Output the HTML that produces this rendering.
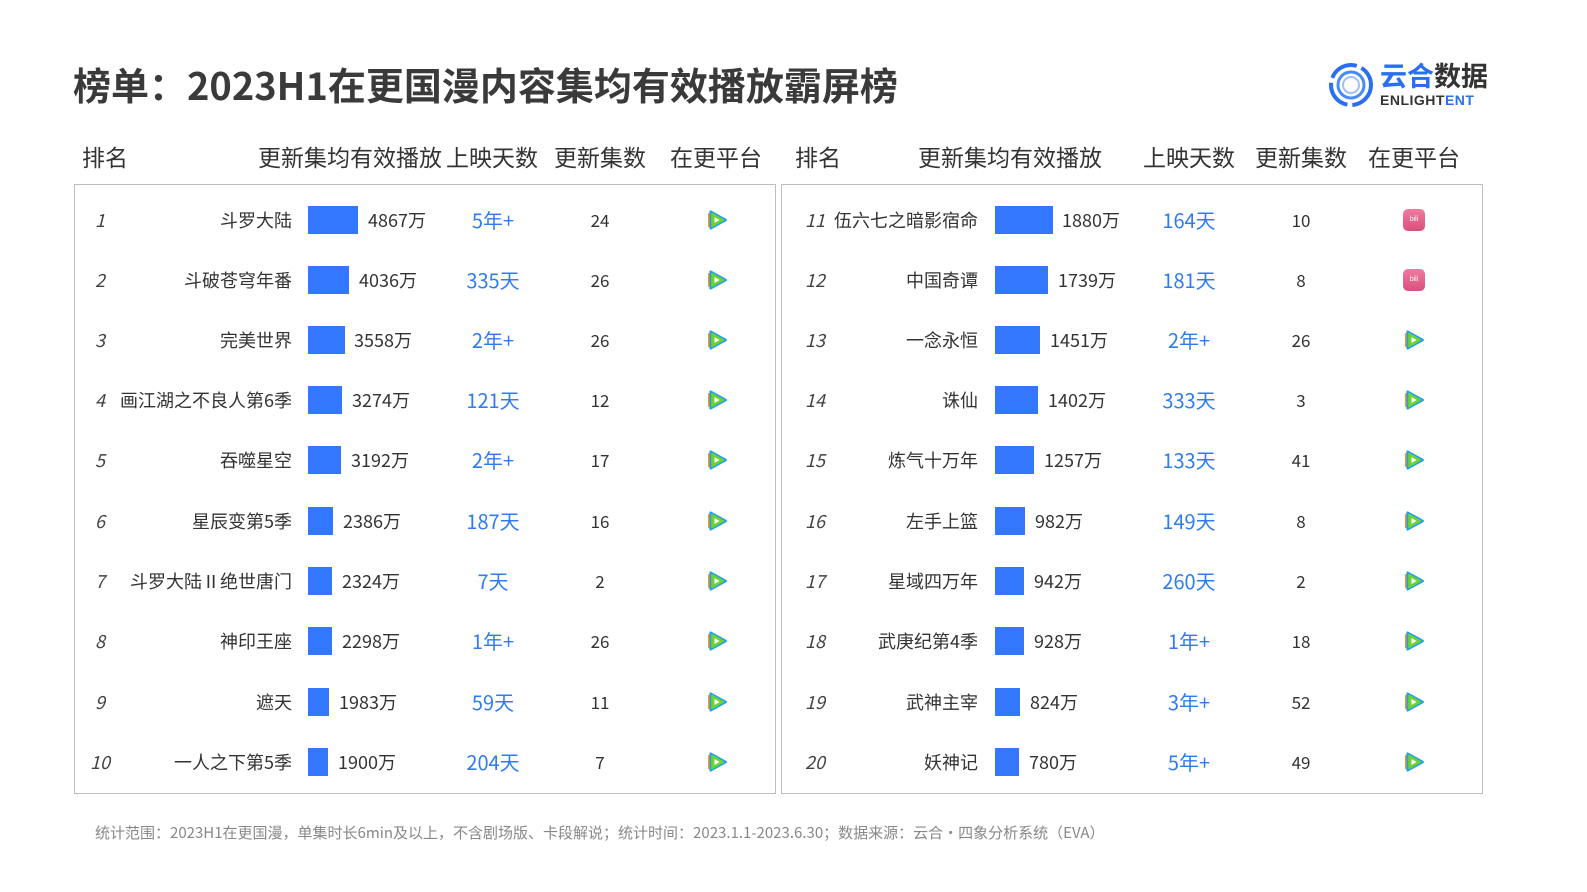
<!DOCTYPE html>
<html><head><meta charset="utf-8"><style>
body{margin:0;width:1587px;height:892px;background:#fff;position:relative;overflow:hidden;font-family:"Liberation Sans","Noto Sans CJK SC",sans-serif;color:#333}
.a{position:absolute;white-space:nowrap}
.t{left:73px;top:58px;font-size:38px;font-weight:bold;color:#3a3a3a;font-family:"Noto Sans CJK SC",sans-serif;line-height:52px}
.h{top:140px;font-size:23px;color:#333;line-height:32px;font-family:"Noto Sans CJK SC",sans-serif}
.box{position:absolute;border:1.5px solid #bdbdbd;top:184px;height:608px}
.r{position:absolute;height:30px;line-height:30px;font-size:18px;left:0;width:1587px;font-family:"Noto Sans CJK SC",sans-serif}
.r span{position:absolute;white-space:nowrap}
.rk{font-style:italic;color:#444}
.nm{text-align:right;color:#333}
.bar{background:#3377ff;height:28px;top:1px}
.d{color:#2f7cf0;font-size:20px;text-align:center;width:100px}
.e{text-align:center;width:60px;font-size:17px}
.ic{width:24px;height:24px;top:3px}
.bl{background:linear-gradient(#f07aa0,#d9517e);border-radius:5px;width:22px;height:22px;top:4px;color:#fff;font-size:7px;line-height:22px;text-align:center;font-family:"Liberation Sans",sans-serif!important}
.ft{left:95px;top:822px;font-size:15px;color:#888;font-family:"Noto Sans CJK SC",sans-serif}
</style></head><body>
<div class="a t">榜单：2023H1在更国漫内容集均有效播放霸屏榜</div>
<div class="a" style="left:1328px;top:62px;width:46px;height:46px">
<svg width="46" height="46" viewBox="0 0 46 46"><circle cx="23" cy="23" r="20" fill="none" stroke="#2a6ff0" stroke-width="4" stroke-dasharray="30 5"/><circle cx="23" cy="23" r="13" fill="none" stroke="#4a8af8" stroke-width="3"/><circle cx="23" cy="23" r="8" fill="none" stroke="#9dc0ff" stroke-width="2"/></svg></div>
<div class="a" style="left:1380px;top:62px;font-size:27px;font-weight:bold;color:#2a6ff0;line-height:30px">云合<span style="color:#333">数据</span></div>
<div class="a" style="left:1380px;top:92px;font-size:14px;font-weight:bold;color:#333;letter-spacing:0.5px">ENLIGHT<span style="color:#2a6ff0">ENT</span></div>

<div class="a h" style="left:82px">排名</div>
<div class="a h" style="left:258px">更新集均有效播放</div>
<div class="a h" style="left:446px">上映天数</div>
<div class="a h" style="left:554px">更新集数</div>
<div class="a h" style="left:670px">在更平台</div>
<div class="a h" style="left:795px">排名</div>
<div class="a h" style="left:918px">更新集均有效播放</div>
<div class="a h" style="left:1143px">上映天数</div>
<div class="a h" style="left:1255px">更新集数</div>
<div class="a h" style="left:1368px">在更平台</div>

<div class="box" style="left:74px;width:700px"></div>
<div class="box" style="left:781px;width:700px"></div>

<svg width="0" height="0" style="position:absolute"><defs><symbol id="tx" viewBox="0 0 24 24"><path d="M6 2.5 Q4 2 4.5 5 L4.5 19 Q4 22 6 21.5 L21 13.3 Q23 12 21 10.7 Z" fill="#1ea0f0"/><path d="M7 5.5 L7 18.5 L18.5 12 Z" fill="#6fd230" stroke="#6fd230" stroke-width="1.5" stroke-linejoin="round"/><path d="M4.5 5 Q3 4 3 7 L3 17 Q3 20 4.5 19 Z" fill="#f7931e"/><path d="M9.5 9 L9.5 15 L14.5 12 Z" fill="#fff"/></symbol></defs></svg>

<div class="r" style="top:205px"><span class="rk" style="left:95px">1</span><span class="nm" style="right:1295px">斗罗大陆</span><span class="bar" style="left:308px;width:50px"></span><span style="left:368px">4867万</span><span class="d" style="left:443px">5年+</span><span class="e" style="left:570px">24</span><svg class="a ic" style="left:705px"><use href="#tx"/></svg>
<span class="rk" style="left:805px">11</span><span class="nm" style="right:609px">伍六七之暗影宿命</span><span class="bar" style="left:995px;width:58px"></span><span style="left:1062px">1880万</span><span class="d" style="left:1139px">164天</span><span class="e" style="left:1271px">10</span><span class="bl" style="left:1403px">bili</span></div>

<div class="r" style="top:265px"><span class="rk" style="left:95px">2</span><span class="nm" style="right:1295px">斗破苍穹年番</span><span class="bar" style="left:308px;width:41px"></span><span style="left:359px">4036万</span><span class="d" style="left:443px">335天</span><span class="e" style="left:570px">26</span><svg class="a ic" style="left:705px"><use href="#tx"/></svg>
<span class="rk" style="left:805px">12</span><span class="nm" style="right:609px">中国奇谭</span><span class="bar" style="left:995px;width:53px"></span><span style="left:1058px">1739万</span><span class="d" style="left:1139px">181天</span><span class="e" style="left:1271px">8</span><span class="bl" style="left:1403px">bili</span></div>

<div class="r" style="top:325px"><span class="rk" style="left:95px">3</span><span class="nm" style="right:1295px">完美世界</span><span class="bar" style="left:308px;width:37px"></span><span style="left:354px">3558万</span><span class="d" style="left:443px">2年+</span><span class="e" style="left:570px">26</span><svg class="a ic" style="left:705px"><use href="#tx"/></svg>
<span class="rk" style="left:805px">13</span><span class="nm" style="right:609px">一念永恒</span><span class="bar" style="left:995px;width:45px"></span><span style="left:1050px">1451万</span><span class="d" style="left:1139px">2年+</span><span class="e" style="left:1271px">26</span><svg class="a ic" style="left:1402px"><use href="#tx"/></svg></div>

<div class="r" style="top:385px"><span class="rk" style="left:95px">4</span><span class="nm" style="right:1295px">画江湖之不良人第6季</span><span class="bar" style="left:308px;width:34px"></span><span style="left:352px">3274万</span><span class="d" style="left:443px">121天</span><span class="e" style="left:570px">12</span><svg class="a ic" style="left:705px"><use href="#tx"/></svg>
<span class="rk" style="left:805px">14</span><span class="nm" style="right:609px">诛仙</span><span class="bar" style="left:995px;width:43px"></span><span style="left:1048px">1402万</span><span class="d" style="left:1139px">333天</span><span class="e" style="left:1271px">3</span><svg class="a ic" style="left:1402px"><use href="#tx"/></svg></div>

<div class="r" style="top:445px"><span class="rk" style="left:95px">5</span><span class="nm" style="right:1295px">吞噬星空</span><span class="bar" style="left:308px;width:33px"></span><span style="left:351px">3192万</span><span class="d" style="left:443px">2年+</span><span class="e" style="left:570px">17</span><svg class="a ic" style="left:705px"><use href="#tx"/></svg>
<span class="rk" style="left:805px">15</span><span class="nm" style="right:609px">炼气十万年</span><span class="bar" style="left:995px;width:39px"></span><span style="left:1044px">1257万</span><span class="d" style="left:1139px">133天</span><span class="e" style="left:1271px">41</span><svg class="a ic" style="left:1402px"><use href="#tx"/></svg></div>

<div class="r" style="top:506px"><span class="rk" style="left:95px">6</span><span class="nm" style="right:1295px">星辰变第5季</span><span class="bar" style="left:308px;width:25px"></span><span style="left:343px">2386万</span><span class="d" style="left:443px">187天</span><span class="e" style="left:570px">16</span><svg class="a ic" style="left:705px"><use href="#tx"/></svg>
<span class="rk" style="left:805px">16</span><span class="nm" style="right:609px">左手上篮</span><span class="bar" style="left:995px;width:30px"></span><span style="left:1035px">982万</span><span class="d" style="left:1139px">149天</span><span class="e" style="left:1271px">8</span><svg class="a ic" style="left:1402px"><use href="#tx"/></svg></div>

<div class="r" style="top:566px"><span class="rk" style="left:95px">7</span><span class="nm" style="right:1295px">斗罗大陆Ⅱ绝世唐门</span><span class="bar" style="left:308px;width:24px"></span><span style="left:342px">2324万</span><span class="d" style="left:443px">7天</span><span class="e" style="left:570px">2</span><svg class="a ic" style="left:705px"><use href="#tx"/></svg>
<span class="rk" style="left:805px">17</span><span class="nm" style="right:609px">星域四万年</span><span class="bar" style="left:995px;width:29px"></span><span style="left:1034px">942万</span><span class="d" style="left:1139px">260天</span><span class="e" style="left:1271px">2</span><svg class="a ic" style="left:1402px"><use href="#tx"/></svg></div>

<div class="r" style="top:626px"><span class="rk" style="left:95px">8</span><span class="nm" style="right:1295px">神印王座</span><span class="bar" style="left:308px;width:24px"></span><span style="left:342px">2298万</span><span class="d" style="left:443px">1年+</span><span class="e" style="left:570px">26</span><svg class="a ic" style="left:705px"><use href="#tx"/></svg>
<span class="rk" style="left:805px">18</span><span class="nm" style="right:609px">武庚纪第4季</span><span class="bar" style="left:995px;width:29px"></span><span style="left:1034px">928万</span><span class="d" style="left:1139px">1年+</span><span class="e" style="left:1271px">18</span><svg class="a ic" style="left:1402px"><use href="#tx"/></svg></div>

<div class="r" style="top:687px"><span class="rk" style="left:95px">9</span><span class="nm" style="right:1295px">遮天</span><span class="bar" style="left:308px;width:21px"></span><span style="left:339px">1983万</span><span class="d" style="left:443px">59天</span><span class="e" style="left:570px">11</span><svg class="a ic" style="left:705px"><use href="#tx"/></svg>
<span class="rk" style="left:805px">19</span><span class="nm" style="right:609px">武神主宰</span><span class="bar" style="left:995px;width:25px"></span><span style="left:1030px">824万</span><span class="d" style="left:1139px">3年+</span><span class="e" style="left:1271px">52</span><svg class="a ic" style="left:1402px"><use href="#tx"/></svg></div>

<div class="r" style="top:747px"><span class="rk" style="left:90px">10</span><span class="nm" style="right:1295px">一人之下第5季</span><span class="bar" style="left:308px;width:20px"></span><span style="left:338px">1900万</span><span class="d" style="left:443px">204天</span><span class="e" style="left:570px">7</span><svg class="a ic" style="left:705px"><use href="#tx"/></svg>
<span class="rk" style="left:805px">20</span><span class="nm" style="right:609px">妖神记</span><span class="bar" style="left:995px;width:24px"></span><span style="left:1029px">780万</span><span class="d" style="left:1139px">5年+</span><span class="e" style="left:1271px">49</span><svg class="a ic" style="left:1402px"><use href="#tx"/></svg></div>

<div class="a ft">统计范围：2023H1在更国漫，单集时长6min及以上，不含剧场版、卡段解说；统计时间：2023.1.1-2023.6.30；数据来源：云合·四象分析系统（EVA）</div>
</body></html>
